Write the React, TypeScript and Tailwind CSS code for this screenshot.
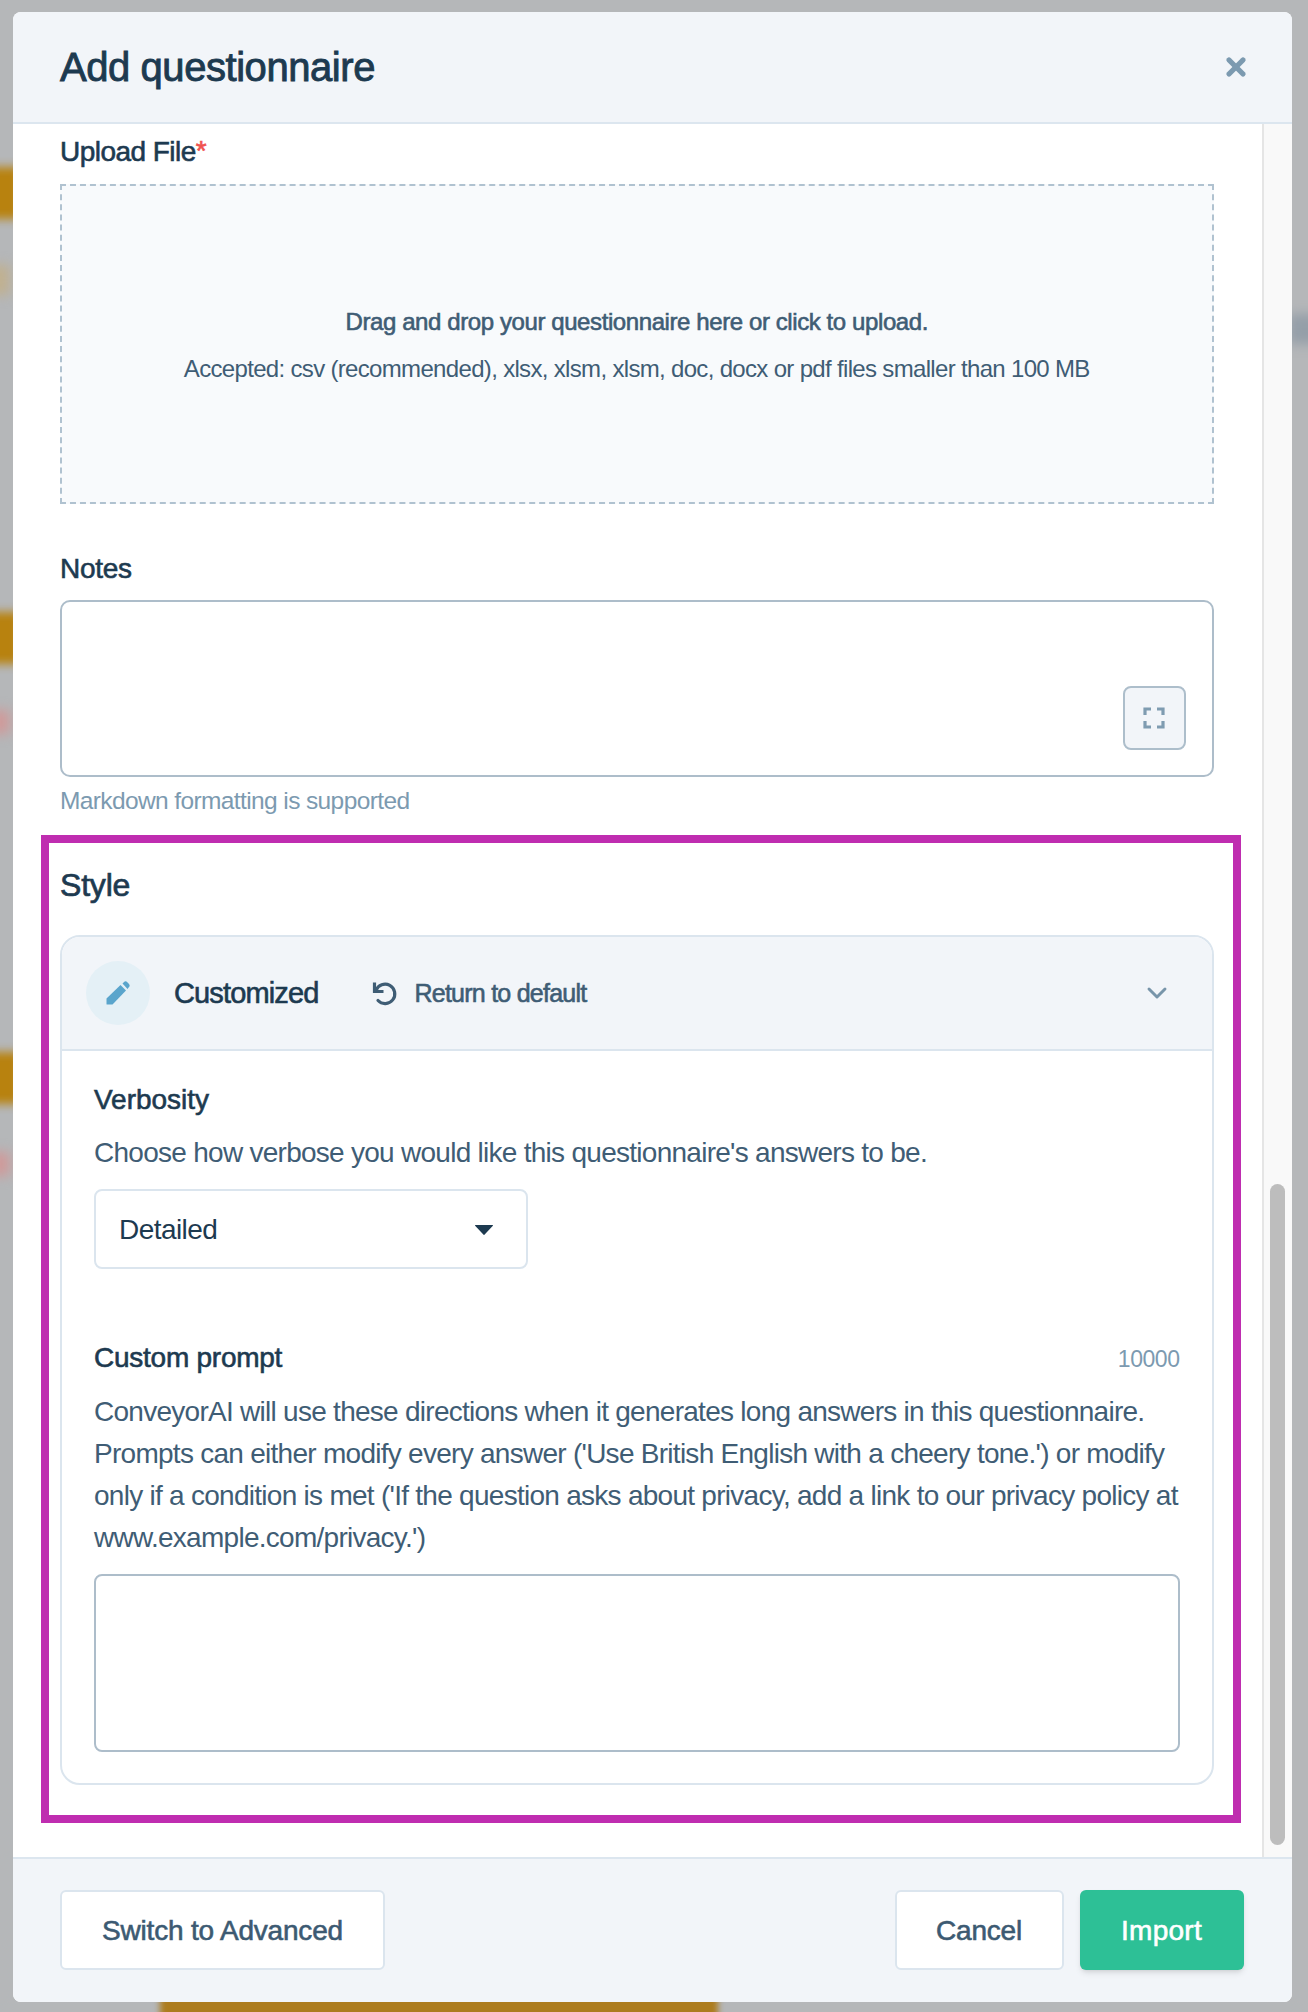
import React from 'react';
import { ChevronDown, X } from 'lucide-react';

const sans = "font-['Liberation_Sans',Arial,sans-serif]";
// the original face is a medium weight; Liberation only has 400/700
const medium = '[-webkit-text-stroke:0.6px]';

const PencilIcon = () => (
  <svg width="24" height="24" viewBox="0 0 24 24" fill="#5aa5cc">
    <path d="M0.5 17.5 14.5 4 20 9.5 6.5 23.5H1a.5.5 0 0 1-.5-.5z" />
    <path d="M16.5 2.5l1.3-1.3a2.5 2.5 0 0 1 3.5 0l1.5 1.5a2.5 2.5 0 0 1 0 3.5L21.5 8z" />
  </svg>
);

const UndoIcon = () => (
  <svg width="26" height="26" viewBox="0 0 26 26" fill="none" stroke="#3f5d75" strokeWidth="3.2">
    <path d="M2.5 2.5v9h9" />
    <path d="M4 10.5A9.7 9.7 0 1 1 6 20.5" strokeLinecap="round" />
  </svg>
);

const ExpandIcon = () => (
  <svg width="22" height="22" viewBox="0 0 22 22" fill="none" stroke="#7f9cb1" strokeWidth="3.2">
    <path d="M2 8V2h6M14 2h6v6M2 14v6h6M14 20h6v-6" />
  </svg>
);

const Backdrop = () => (
  <div className="absolute inset-0 overflow-hidden">
    <div className="absolute left-[-30px] top-[167px] h-[52px] w-[50px] bg-[#b8820f] blur-[5px]" />
    <div className="absolute left-[-30px] top-[265px] h-[30px] w-[40px] bg-[#c0b090] blur-[6px]" />
    <div className="absolute left-[-30px] top-[612px] h-[52px] w-[50px] bg-[#b8820f] blur-[5px]" />
    <div className="absolute left-[-30px] top-[710px] h-[24px] w-[40px] bg-[#cf9a9a] blur-[6px]" />
    <div className="absolute left-[-30px] top-[1052px] h-[52px] w-[50px] bg-[#b8820f] blur-[5px]" />
    <div className="absolute left-[-30px] top-[1152px] h-[24px] w-[40px] bg-[#cf9a9a] blur-[6px]" />
    <div className="absolute left-[160px] top-[1990px] h-[40px] w-[558px] bg-[#ad7c1e] blur-[3px]" />
    <div className="absolute right-[-20px] top-[314px] h-[30px] w-[40px] bg-[#949ea8] blur-[6px]" />
  </div>
);

const App = () => {
  return (
    <div className={`relative flex h-[2012px] w-[1308px] bg-[#b5b7b9] pb-[10px] pl-[12.5px] pt-3 ${sans}`}>
      <Backdrop />
      <div className="relative flex h-full w-[1279px] flex-col overflow-hidden rounded-lg bg-white">
        {/* Header */}
        <div className="flex h-[112px] shrink-0 items-center justify-between border-b-2 border-[#dce6ef] bg-[#f2f5f9] pl-[47.5px] pr-[42px]">
          <h1 className="text-[40px] tracking-[-0.011em] text-[#1d3a50] [-webkit-text-stroke:0.9px]">Add questionnaire</h1>
          <X size={28} strokeWidth={4.5} color="#7c9ab0" />
        </div>

        {/* Body */}
        <div className="flex min-h-0 flex-1">
          <div className="min-w-0 flex-1 pl-[47.5px] pr-[48px]">
            <div className={`flex h-[60px] items-center pb-[4px] text-[28px] tracking-[-0.019em] text-[#1d3a50] ${medium}`}>
              Upload File<span className="self-start pt-[6px] text-[#f0524f]">*</span>
            </div>
            <div className="flex h-[320px] flex-col items-center justify-center gap-[19px] border-2 border-dashed border-[#b0c2d0] bg-[#f8fafc] pt-[2px] text-[#3f5d75]">
              <p className={`text-[24px] leading-[28px] tracking-[-0.017em] ${medium}`}>Drag and drop your questionnaire here or click to upload.</p>
              <p className="text-[24px] leading-[28px] tracking-[-0.028em]">Accepted: csv (recommended), xlsx, xlsm, xlsm, doc, docx or pdf files smaller than 100 MB</p>
            </div>

            <div className={`mt-[46px] text-[28px] leading-[38px] tracking-[-0.011em] text-[#1d3a50] ${medium}`}>Notes</div>
            <div className="relative mt-[12px] h-[177px]">
              <textarea className="block h-full w-full resize-none rounded-[10px] border-2 border-[#adbdca] bg-white" />
              <button type="button" className="absolute bottom-[27px] right-[28px] flex h-[64px] w-[63px] items-center justify-center rounded-[8px] border-2 border-[#adbecb] bg-[#f2f5f9]">
                <ExpandIcon />
              </button>
            </div>
            <div className="mt-[8px] text-[24.5px] leading-[32px] tracking-[-0.025em] text-[#7c9ab0]">Markdown formatting is supported</div>

            <h2 className="mt-[49px] text-[32px] leading-[38px] tracking-[-0.006em] text-[#1d3a50] [-webkit-text-stroke:0.7px]">Style</h2>

            {/* Style card */}
            <div className="mt-[31px] overflow-hidden rounded-[20px] border-2 border-[#dbe5ee]">
              <div className="flex h-[114px] items-center border-b-2 border-[#dbe5ee] bg-[#f2f5f9] pl-[24px] pr-[39px]">
                <div className="flex h-[64px] w-[64px] items-center justify-center rounded-full bg-[#e4f0f6]">
                  <PencilIcon />
                </div>
                <span className={`ml-[24px] mt-[2px] text-[29px] tracking-[-0.03em] text-[#1d3a50] ${medium}`}>Customized</span>
                <span className="ml-[54px]"><UndoIcon /></span>
                <span className={`ml-[16px] mt-[2px] text-[25px] tracking-[-0.03em] text-[#3f5d75] ${medium}`}>Return to default</span>
                <ChevronDown className="ml-auto" size={32} strokeWidth={2.2} color="#7895aa" />
              </div>
              <div className="px-[32px] pb-[31px] pt-[31px]">
                <div className={`text-[28px] leading-[36px] tracking-[-0.001em] text-[#1d3a50] ${medium}`}>Verbosity</div>
                <p className="mt-[18px] text-[28px] leading-[34px] tracking-[-0.026em] text-[#3f5d75]">Choose how verbose you would like this questionnaire's answers to be.</p>
                <div className="mt-[19px] flex h-[80px] w-[434px] items-center justify-between rounded-[8px] border-2 border-[#dbe5ee] pl-[23px] pr-[33px] pt-[2px]">
                  <span className="text-[28px] tracking-[-0.02em] text-[#1d3a50]">Detailed</span>
                  <svg width="18" height="10" viewBox="0 0 18 10" fill="#1d3a50">
                    <path d="M0.5 0h17a.5.5 0 0 1 .4.8L9.4 9.7a.5.5 0 0 1-.8 0L.1.8A.5.5 0 0 1 .5 0z" />
                  </svg>
                </div>
                <div className="mt-[70px] flex items-center justify-between">
                  <span className={`text-[28px] leading-[36px] tracking-[-0.009em] text-[#1d3a50] ${medium}`}>Custom prompt</span>
                  <span className="pt-[3px] text-[23px] tracking-[-0.02em] text-[#7c9ab0]">10000</span>
                </div>
                <p className="mt-[14px] whitespace-nowrap text-[28px] leading-[42px] tracking-[-0.026em] text-[#3f5d75]">
                  ConveyorAI will use these directions when it generates long answers in this questionnaire.
                  <br />
                  Prompts can either modify every answer ('Use British English with a cheery tone.') or modify
                  <br />
                  only if a condition is met ('If the question asks about privacy, add a link to our privacy policy at
                  <br />
                  www.example.com/privacy.')
                </p>
                <textarea className="mt-[15px] block h-[178px] w-full resize-none rounded-[8px] border-2 border-[#adbdca] bg-white" />
              </div>
            </div>
          </div>

          {/* Scrollbar */}
          <div className="flex w-[30px] shrink-0 items-end border-l-2 border-[#e5e5e5] bg-[#f9f9f9] pb-[12px] pl-[6px]">
            <div className="h-[661px] w-[15px] rounded-full bg-[#bdbdbd]" />
          </div>
        </div>

        {/* Footer */}
        <div className="flex h-[145px] shrink-0 items-start justify-between border-t-2 border-[#dce6ef] bg-[#f2f5f9] pl-[47.5px] pr-[48px] pt-[31px]">
          <button type="button" className={`h-[80px] w-[325px] rounded-[6px] border-2 border-[#dbe5ee] bg-white pt-[2px] text-[28px] tracking-[-0.007em] text-[#3c5a72] ${medium}`}>Switch to Advanced</button>
          <div className="flex gap-[16px]">
            <button type="button" className={`h-[80px] w-[169px] rounded-[6px] border-2 border-[#dbe5ee] bg-white pt-[2px] text-[28px] tracking-[-0.007em] text-[#3c5a72] ${medium}`}>Cancel</button>
            <button type="button" className={`h-[80px] w-[164px] rounded-[6px] bg-[#2dc096] pt-[2px] text-[28px] tracking-[0.01em] text-white shadow-md ${medium}`}>Import</button>
          </div>
        </div>

        {/* Review highlight drawn over the form */}
        <div className="pointer-events-none absolute left-[28px] top-[823px] h-[988px] w-[1200px] border-[8px] border-[#bf2db0]" />
      </div>
    </div>
  );
};

export default App;
